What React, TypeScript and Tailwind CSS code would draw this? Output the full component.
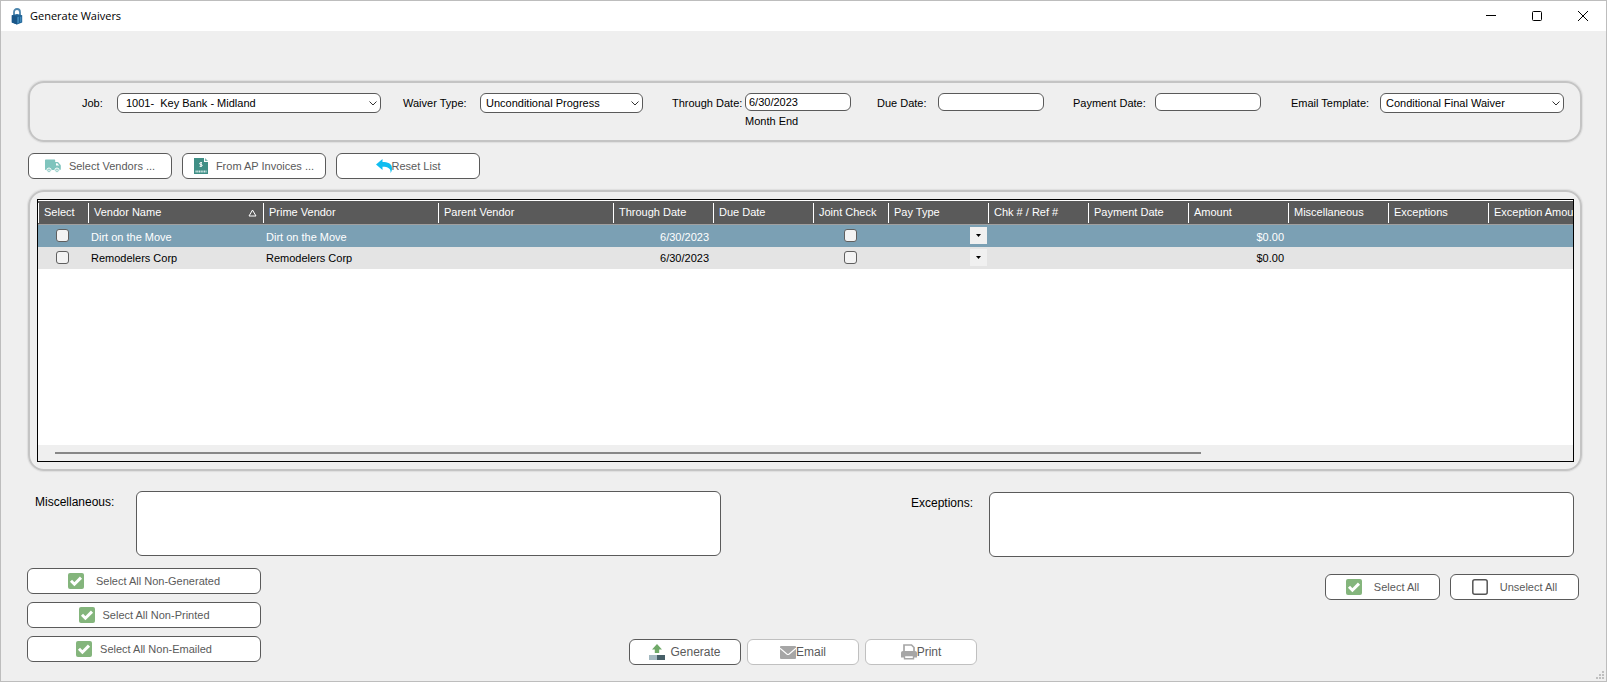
import clsx from "clsx";
import { useState, type ReactNode } from "react";

interface WaiverRow {
  id: number;
  vendor: string;
  primeVendor: string;
  throughDate: string;
  amount: string;
}

const ROWS: WaiverRow[] = [
  {
    id: 1,
    vendor: "Dirt on the Move",
    primeVendor: "Dirt on the Move",
    throughDate: "6/30/2023",
    amount: "$0.00",
  },
  {
    id: 2,
    vendor: "Remodelers Corp",
    primeVendor: "Remodelers Corp",
    throughDate: "6/30/2023",
    amount: "$0.00",
  },
];

const COLUMNS = [
  { label: "Select", className: "w-[50px]" },
  { label: "Vendor Name", className: "w-[175px]", sorted: true },
  { label: "Prime Vendor", className: "w-[175px]" },
  { label: "Parent Vendor", className: "w-[175px]" },
  { label: "Through Date", className: "w-[100px]" },
  { label: "Due Date", className: "w-[100px]" },
  { label: "Joint Check", className: "w-[75px]" },
  { label: "Pay Type", className: "w-[100px]" },
  { label: "Chk # / Ref #", className: "w-[100px]" },
  { label: "Payment Date", className: "w-[100px]" },
  { label: "Amount", className: "w-[100px]" },
  { label: "Miscellaneous", className: "w-[100px]" },
  { label: "Exceptions", className: "w-[100px]" },
  { label: "Exception Amount", className: "w-[120px]" },
];

const LockIcon = () => (
  <svg width="12" height="17" viewBox="0 0 12 17">
    <path
      d="M3 8V4.2C3 2.2 4.3 1 6 1s3 1.2 3 3.2V8"
      fill="none"
      stroke="#4d86ad"
      strokeWidth="1.8"
    />
    <path d="M.8 7.2 6 6l5.2 1.2v7.2L6 16.5.8 14.4z" fill="#1f6396" />
    <path d="M.8 7.2 6 8.4v8.1L.8 14.4z" fill="#1a5688" />
    <path d="M6.2 9.2 8 8.8v6l-1.8.7zM9 9l1.4-.4v5.2L9 14.3z" fill="#3f87b8" />
  </svg>
);

const TruckIcon = () => (
  <svg width="16" height="14" viewBox="0 0 16 14">
    <path
      d="M1 .5h8.2c.6 0 1 .4 1 1V3h2.3c.4 0 .7.2.9.4l2 2.3c.3.3.4.6.4 1V10c0 .6-.3 1-.8 1H1c-.6 0-1-.4-1-1V1.5c0-.6.4-1 1-1z"
      fill="#7fc4bd"
    />
    <path d="M11 4.2h1.3l1.9 2.3H11z" fill="#fff" />
    <circle cx="4" cy="11.2" r="2.2" fill="#7fc4bd" stroke="#fff" />
    <circle cx="12" cy="11.2" r="2.2" fill="#7fc4bd" stroke="#fff" />
    <circle cx="4" cy="11.2" r=".8" fill="#fff" />
    <circle cx="12" cy="11.2" r=".8" fill="#fff" />
  </svg>
);

const InvoiceIcon = () => (
  <svg width="14" height="16" viewBox="0 0 14 16">
    <path d="M0 0h10v4h4v12H0z" fill="#3f8f86" />
    <path d="M11 0l3 3h-3z" fill="#7fb8b1" />
    <path
      d="M8 4.7H6.6c-1.3 0-1.3 1.8 0 1.8h.6c1.3 0 1.3 1.8 0 1.8H5.6M7 4v5"
      fill="none"
      stroke="#fff"
    />
    <path
      d="M1.5 13.5h11"
      stroke="#d8ebe9"
      strokeWidth="2"
      strokeDasharray="1.2 .5"
    />
  </svg>
);

const UndoIcon = () => (
  <svg width="16" height="14" viewBox="0 0 16 14">
    <path
      d="M6.5 0v3c5 .1 9.5 1.2 9.5 6.5 0 2-.6 3.3-1.4 4.5C15 9.5 12 7.8 6.5 7.8V11L0 5.4z"
      fill="#0fbdf0"
    />
  </svg>
);

const CheckBoxIcon = () => (
  <svg width="16" height="16" viewBox="0 0 16 16">
    <rect width="16" height="16" rx="2" fill="#84b57c" />
    <path
      d="M3 7.8 6.4 11.2 13 4.6"
      fill="none"
      stroke="#fff"
      strokeWidth="3"
    />
  </svg>
);

const EmptyBoxIcon = () => (
  <svg width="16" height="16" viewBox="0 0 16 16">
    <rect
      x=".8"
      y=".8"
      width="14.4"
      height="14.4"
      rx="2"
      fill="none"
      stroke="#555"
      strokeWidth="1.5"
    />
  </svg>
);

const UploadIcon = () => (
  <svg width="16" height="16" viewBox="0 0 16 16">
    <path d="M8 0l5 5.5h-2.8V9H5.8V5.5H3z" fill="#6fa968" />
    <path d="M0 11h8v5H0z" fill="#a3b8c0" />
    <path d="M8 11h8v5H8z" fill="#465f68" />
  </svg>
);

const MailIcon = () => (
  <svg width="16" height="13" viewBox="0 0 16 13">
    <rect width="16" height="13" rx="1" fill="#a6a6a6" />
    <path
      d="M0 2.2 6.8 8c.8.6 1.6.6 2.4 0L16 2.2"
      fill="none"
      stroke="#fff"
      strokeWidth="1.1"
    />
  </svg>
);

const PrinterIcon = () => (
  <svg width="16" height="16" viewBox="0 0 16 16">
    <path
      d="M3 8V1h7.5L13 3.5V8"
      fill="none"
      stroke="#a6a6a6"
      strokeWidth="1.7"
    />
    <path
      d="M2 7h12c1.2 0 2 .8 2 2v4.5h-3V11H3v2.5H0V9c0-1.2.8-2 2-2z"
      fill="#a6a6a6"
    />
    <path
      d="M3.5 11.5h9v3.3h-9z"
      fill="#fff"
      stroke="#a6a6a6"
      strokeWidth="1.4"
    />
  </svg>
);

interface PushButtonProps {
  children: ReactNode;
  icon: ReactNode;
  className?: string;
  disabled?: boolean;
  onClick?: () => void;
}

function PushButton({
  children,
  icon,
  className,
  disabled,
  onClick,
}: PushButtonProps) {
  return (
    <button
      type="button"
      disabled={disabled}
      onClick={onClick}
      className={clsx(
        "flex h-[26px] items-center justify-center rounded-md border bg-white whitespace-nowrap text-[#5a5a5a]",
        disabled ? "border-[#c0c0c0]" : "border-[#5a5a5a]",
        className,
      )}
    >
      {icon}
      <span>{children}</span>
    </button>
  );
}

interface SelectFieldProps {
  id: string;
  label: string;
  value: string;
  labelClass: string;
  boxClass: string;
  selectClass?: string;
}

function SelectField({
  id,
  label,
  value,
  labelClass,
  boxClass,
  selectClass = "pl-[5px]",
}: SelectFieldProps) {
  return (
    <div className="flex items-start">
      <label
        htmlFor={id}
        className={clsx("shrink-0 leading-5 whitespace-nowrap", labelClass)}
      >
        {label}
      </label>
      <div className={clsx("relative", boxClass)}>
        <select
          id={id}
          className={clsx(
            "block h-5 w-full appearance-none rounded-md border border-[#5a5a5a] bg-white pr-5",
            selectClass,
          )}
        >
          <option>{value}</option>
        </select>
        <svg
          width="8"
          height="5"
          viewBox="0 0 8 5"
          className="pointer-events-none absolute top-2 right-1"
        >
          <path d="M.5.5 4 4 7.5.5" fill="none" stroke="#333" />
        </svg>
      </div>
    </div>
  );
}

interface DateFieldProps {
  id: string;
  label: string;
  value?: string;
  note?: string;
  labelClass: string;
}

function DateField({ id, label, value, note, labelClass }: DateFieldProps) {
  return (
    <div className="flex items-start">
      <label
        htmlFor={id}
        className={clsx("shrink-0 leading-5 whitespace-nowrap", labelClass)}
      >
        {label}
      </label>
      <div>
        <input
          id={id}
          type="text"
          defaultValue={value}
          className="block h-[18px] w-[106px] rounded-md border border-[#5a5a5a] bg-white px-[3px]"
        />
        {note && <p className="leading-5">{note}</p>}
      </div>
    </div>
  );
}

function GridCheckbox({
  label,
  checked,
  onChange,
}: {
  label: string;
  checked?: boolean;
  onChange?: () => void;
}) {
  return (
    <input
      type="checkbox"
      aria-label={label}
      checked={checked}
      onChange={onChange}
      className="mx-auto block size-[13px] appearance-none rounded-[3px] border border-[#5f5f5f] bg-[#f3f3f3] checked:bg-[#84b57c]"
    />
  );
}

export default function App() {
  const [selected, setSelected] = useState<number[]>([]);

  const toggle = (id: number) =>
    setSelected((ids) =>
      ids.includes(id) ? ids.filter((other) => other !== id) : [...ids, id],
    );
  const selectAll = () => setSelected(ROWS.map((row) => row.id));

  return (
    <div className="relative flex min-h-screen flex-col border border-[#bdbdbd] bg-[#efefef] font-['Liberation_Sans',Arial,sans-serif] text-[11px] text-black">
      {/* Title bar */}
      <header className="flex h-[30px] items-center bg-white pl-[10px]">
        <LockIcon />
        <h1 className="ml-[7px] flex-1 font-['Open_Sans',sans-serif] text-[11px]">
          Generate Waivers
        </h1>
        <button
          type="button"
          aria-label="Minimize"
          className="flex h-full w-[46px] items-center justify-center"
        >
          <svg width="10" height="10" viewBox="0 0 10 10">
            <path d="M0 4.5h10" stroke="#000" />
          </svg>
        </button>
        <button
          type="button"
          aria-label="Maximize"
          className="flex h-full w-[46px] items-center justify-center"
        >
          <svg width="10" height="10" viewBox="0 0 10 10">
            <rect
              x=".5"
              y=".5"
              width="9"
              height="9"
              rx="1"
              fill="none"
              stroke="#000"
            />
          </svg>
        </button>
        <button
          type="button"
          aria-label="Close"
          className="flex h-full w-[46px] items-center justify-center"
        >
          <svg width="10" height="10" viewBox="0 0 10 10">
            <path d="M0 0l10 10M10 0L0 10" stroke="#000" />
          </svg>
        </button>
      </header>

      {/* Waiver filters */}
      <section className="mt-[50px] mr-6 ml-[27px] grid h-[61px] grid-cols-[321fr_269fr_205fr_196fr_218fr_274fr] rounded-2xl border-2 border-[#c4c4c4] pt-[10px] pr-[15px] pl-[52px] shadow-[0_0_1px_1px_#dedede]">
        <SelectField
          id="job"
          label="Job:"
          value={"1001-\u00a0 Key Bank - Midland"}
          labelClass="w-[35px]"
          boxClass="w-[264px]"
          selectClass="pl-2"
        />
        <SelectField
          id="waiver-type"
          label="Waiver Type:"
          value="Unconditional Progress"
          labelClass="w-[77px]"
          boxClass="w-[163px]"
        />
        <DateField
          id="through-date"
          label="Through Date:"
          value="6/30/2023"
          note="Month End"
          labelClass="w-[73px]"
        />
        <DateField id="due-date" label="Due Date:" labelClass="w-[61px]" />
        <DateField
          id="payment-date"
          label="Payment Date:"
          labelClass="w-[82px]"
        />
        <SelectField
          id="email-template"
          label="Email Template:"
          value="Conditional Final Waiver"
          labelClass="w-[89px]"
          boxClass="w-[184px]"
        />
      </section>

      <div className="mt-[11px] ml-[27px] flex gap-[10px]">
        <PushButton icon={<TruckIcon />} className="w-36 gap-2">
          Select Vendors ...
        </PushButton>
        <PushButton icon={<InvoiceIcon />} className="w-36 gap-2">
          From AP Invoices ...
        </PushButton>
        <PushButton
          icon={<UndoIcon />}
          className="w-36"
          onClick={() => setSelected([])}
        >
          Reset List
        </PushButton>
      </div>

      {/* Vendor grid */}
      <section className="mt-[11px] mr-6 ml-[27px] flex min-h-[280px] flex-1 flex-col rounded-2xl border-2 border-[#c4c4c4] py-[7px] pr-[6px] pl-[7px] shadow-[0_0_1px_1px_#dedede]">
        <div className="flex flex-1 flex-col overflow-hidden border border-black bg-white">
          <div className="flex-1 overflow-hidden">
            <table className="w-[1570px] table-fixed border-collapse">
              <thead>
                <tr className="h-6 border-t border-b border-t-white border-b-[#a0a0a0] bg-[#5a5a5a] text-white">
                  {COLUMNS.map((column) => (
                    <th
                      key={column.label}
                      className={clsx(
                        "p-0 text-left font-normal",
                        column.className,
                      )}
                    >
                      <div className="flex h-5 items-center justify-between border-l border-white pr-[6px] pl-[5px] whitespace-nowrap">
                        {column.label}
                        {column.sorted && (
                          <svg width="9" height="8" viewBox="0 0 9 8">
                            <path
                              d="M4.5 1 8 7H1z"
                              fill="none"
                              stroke="#fff"
                            />
                          </svg>
                        )}
                      </div>
                    </th>
                  ))}
                </tr>
              </thead>
              <tbody>
                {ROWS.map((row, index) => (
                  <tr
                    key={row.id}
                    className={clsx(
                      "h-[22px]",
                      index === 0 ? "bg-[#7ba0b4] text-white" : "bg-[#e4e4e4]",
                    )}
                  >
                    <td className="p-0 pr-[2px]">
                      <GridCheckbox
                        label={`Select ${row.vendor}`}
                        checked={selected.includes(row.id)}
                        onChange={() => toggle(row.id)}
                      />
                    </td>
                    <td className="p-0 pt-[2px] pl-[3px]">{row.vendor}</td>
                    <td className="p-0 pt-[2px] pl-[3px]">{row.primeVendor}</td>
                    <td className="p-0" />
                    <td className="p-0 pt-[2px] pr-1 text-right">
                      {row.throughDate}
                    </td>
                    <td className="p-0" />
                    <td className="p-0">
                      <GridCheckbox label={`Joint check ${row.vendor}`} />
                    </td>
                    <td className="p-0">
                      <button
                        type="button"
                        aria-label={`Pay type ${row.vendor}`}
                        className="mr-px ml-auto flex size-[17px] items-center justify-center bg-[#f0f0f0]"
                      >
                        <svg width="5" height="3" viewBox="0 0 5 3">
                          <path d="M0 0h5L2.5 3z" fill="#000" />
                        </svg>
                      </button>
                    </td>
                    <td className="p-0" />
                    <td className="p-0" />
                    <td className="p-0 pt-[2px] pr-1 text-right">
                      {row.amount}
                    </td>
                    <td className="p-0" />
                    <td className="p-0" />
                    <td className="p-0" />
                  </tr>
                ))}
              </tbody>
            </table>
          </div>
          {/* Horizontal scroll track */}
          <div className="flex h-4 items-center bg-[#efefef] pr-[372px] pl-[17px]">
            <div className="h-[2px] flex-1 bg-[#878787]" />
          </div>
        </div>
      </section>

      <section className="mt-5 mr-8 ml-[34px] grid grid-cols-[686fr_190fr_663fr] text-[12px]">
        <div className="flex">
          <label htmlFor="misc" className="w-[101px] shrink-0 pt-px leading-5">
            Miscellaneous:
          </label>
          <textarea
            id="misc"
            className="h-[65px] flex-1 resize-none rounded-md border border-[#5a5a5a] bg-white p-1"
          />
        </div>
        <div />
        <div className="flex pt-px">
          <label
            htmlFor="exceptions"
            className="w-[78px] shrink-0 pt-px leading-5"
          >
            Exceptions:
          </label>
          <textarea
            id="exceptions"
            className="h-[65px] flex-1 resize-none rounded-md border border-[#5a5a5a] bg-white p-1"
          />
        </div>
      </section>

      <footer className="mt-[11px] mr-[27px] mb-4 ml-[26px] grid grid-cols-3">
        <div className="flex flex-col gap-2">
          <PushButton icon={<CheckBoxIcon />} className="w-[234px] gap-3">
            Select All Non-Generated
          </PushButton>
          <PushButton icon={<CheckBoxIcon />} className="w-[234px] gap-2">
            Select All Non-Printed
          </PushButton>
          <PushButton icon={<CheckBoxIcon />} className="w-[234px] gap-2">
            Select All Non-Emailed
          </PushButton>
        </div>
        <div className="flex items-end justify-center gap-[6px] pt-[71px] text-[12px]">
          <PushButton icon={<UploadIcon />} className="w-28 gap-[5px]">
            Generate
          </PushButton>
          <PushButton icon={<MailIcon />} className="w-28" disabled>
            Email
          </PushButton>
          <PushButton icon={<PrinterIcon />} className="w-28" disabled>
            Print
          </PushButton>
        </div>
        <div className="flex items-start justify-end gap-[10px] pt-[6px]">
          <PushButton
            icon={<CheckBoxIcon />}
            className="w-[115px] gap-3"
            onClick={selectAll}
          >
            Select All
          </PushButton>
          <PushButton
            icon={<EmptyBoxIcon />}
            className="w-[129px] gap-3"
            onClick={() => setSelected([])}
          >
            Unselect All
          </PushButton>
        </div>
      </footer>

      {/* Resize grip */}
      <svg
        width="8"
        height="8"
        viewBox="0 0 8 8"
        className="absolute right-[2px] bottom-[2px]"
      >
        <path
          d="M6 0h2v2H6zM3 3h2v2H3zM6 3h2v2H6zM0 6h2v2H0zM3 6h2v2H3zM6 6h2v2H6z"
          fill="#bfbfbf"
        />
      </svg>
    </div>
  );
}
